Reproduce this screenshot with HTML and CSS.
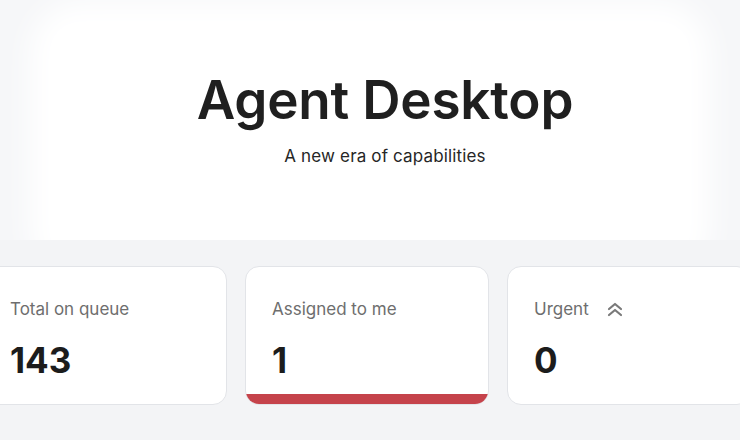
FILE: index.html
```html
<!DOCTYPE html>
<html>
<head>
<meta charset="utf-8">
<link rel="stylesheet" href="styles.css">
</head>
<body>
<header class="hero">
  <div class="hero-inner">
    <h1 class="title">Agent Desktop</h1>
    <p class="subtitle">A new era of capabilities</p>
  </div>
</header>
<section class="stats">
  <div class="card">
    <div class="label">Total on queue</div>
    <div class="value">143</div>
  </div>
  <div class="card card-active">
    <div class="label">Assigned to me</div>
    <div class="value">1</div>
  </div>
  <div class="card">
    <div class="label">Urgent
      <svg class="icon" width="18" height="15" viewBox="0 0 18 15" fill="none" stroke="#7a7a7a" stroke-width="2.2" stroke-linecap="round" stroke-linejoin="round"><path d="M3 7 L9 2 L15 7"/><path d="M3 13 L9 8 L15 13"/></svg>
    </div>
    <div class="value">0</div>
  </div>
</section>
</body>
</html>
```
FILE: styles.css
```css
* { box-sizing: border-box; }
html, body { margin: 0; padding: 0; }
body {
  width: 740px;
  height: 440px;
  overflow: hidden;
  background: #f3f4f6;
  font-family: Inter, "Noto Sans", sans-serif;
  color: #1e1e1e;
}
.hero {
  height: 240px;
  background: #f6f7f9;
  padding: 22px 50px 0;
  overflow: hidden;
}
.hero-inner {
  height: 240px;
  background: #fff;
  border-radius: 30px;
  box-shadow: 0 0 30px 20px #fff;
  padding-top: 48px;
  padding-left: 30px;
  text-align: center;
}
.title {
  margin: 0;
  font-size: 53px;
  font-weight: 600;
  letter-spacing: -0.2px;
  line-height: 60px;
  color: #1f1f1f;
}
.subtitle {
  margin: 16px 0 0;
  font-size: 17px;
  letter-spacing: 0.15px;
  line-height: 20px;
  color: #262626;
}
.stats {
  display: flex;
  gap: 18px;
  padding-top: 26px;
  margin-left: -17px;
}
.card {
  flex: 0 0 244px;
  height: 139px;
  background: #fff;
  border: 1px solid #e2e4e8;
  border-radius: 14px;
  padding: 30px 26px 0;
  overflow: hidden;
  position: relative;
}
.card:first-child { padding-left: 26px; }
.card-active::after {
  content: "";
  position: absolute;
  left: 0; right: 0; bottom: 0;
  height: 10px;
  background: #c5434b;
}
.label {
  font-size: 17px;
  line-height: 24px;
  color: #6e6e6e;
  display: flex;
  align-items: center;
  gap: 17px;
}
.icon { display: block; }
.value {
  margin-top: 19px;
  font-size: 35px;
  font-weight: 700;
  line-height: 40px;
  color: #1c1c1c;
}
```
